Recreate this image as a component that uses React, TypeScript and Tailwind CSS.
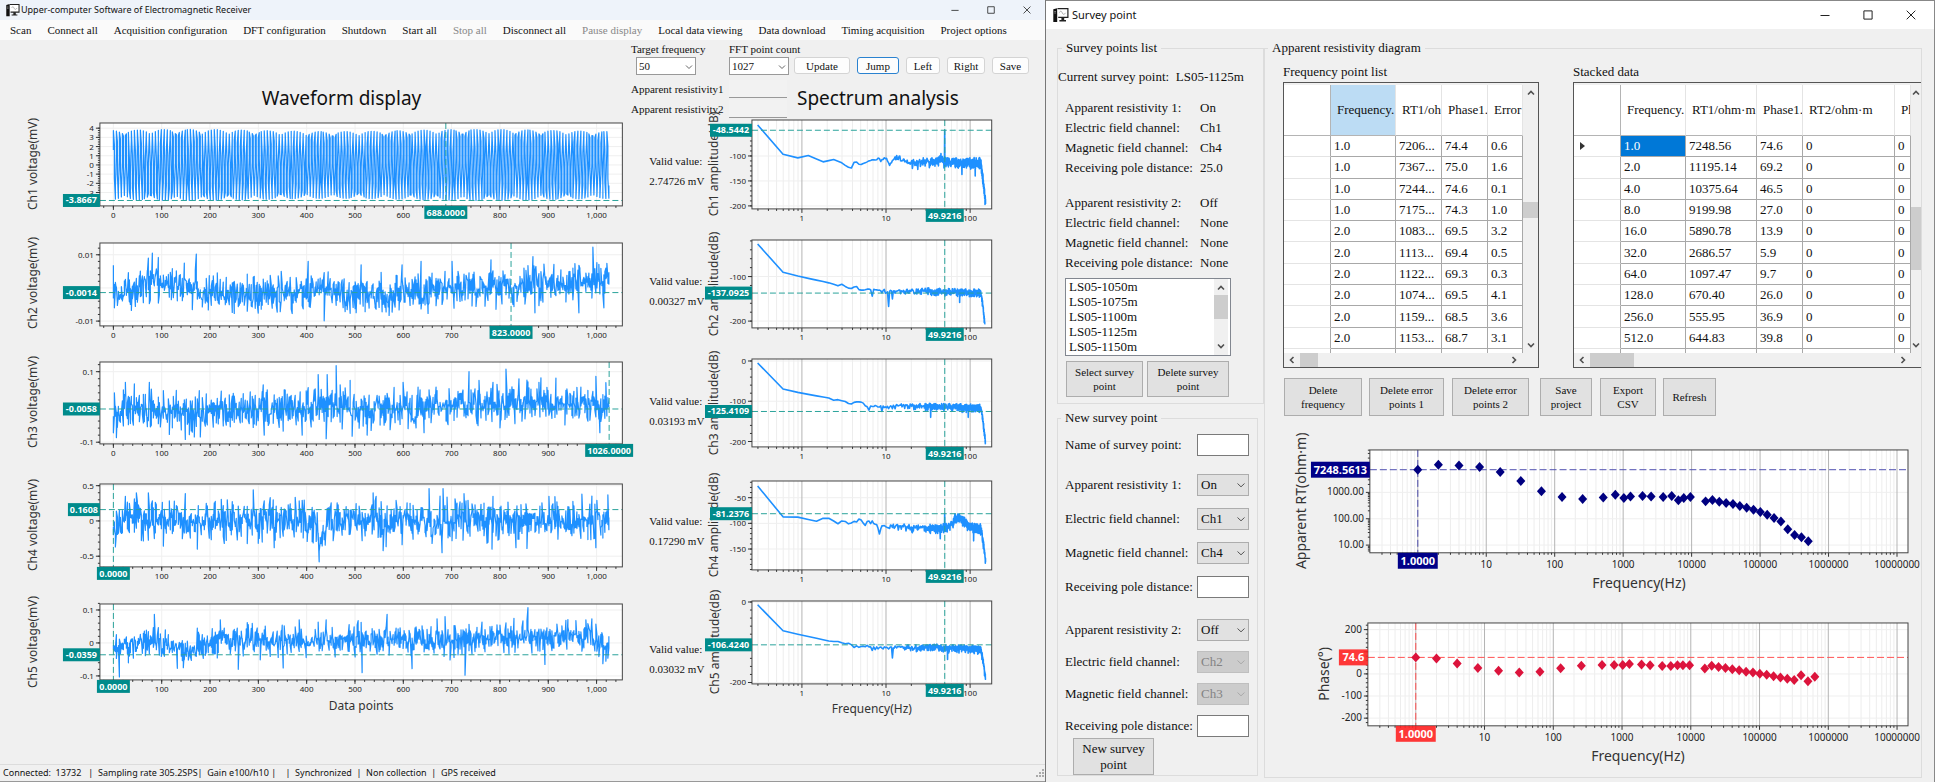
import { useId, useMemo, type ReactNode } from 'react'
import clsx from 'clsx'

type Point = [number, number]

interface Axis {
  at: (v: number) => number
  major: number[]
  minor: number[]
  format?: (v: number) => string
}

interface PlotProps {
  width: number
  height: number
  box: { left: number; top: number; right: number; bottom: number }
  x: Axis
  y: Axis
  cursor: Point
  cursorText: [string, string]
  yTitle: string
  yTitleAt: Point
  xTitle?: string
  xTitleY?: number
  strongGrid?: boolean
  large?: boolean
  tone: 'teal' | 'navy' | 'red'
  children: ReactNode
}

const TONES = {
  teal: { line: 'stroke-[#2aa39b]', box: 'fill-[#008b8b]' },
  navy: { line: 'stroke-[#5050b0]', box: 'fill-[#000088]' },
  red: { line: 'stroke-[#ff5050]', box: 'fill-[#ff2222]/90' },
}

// ---- scales ----

const linear = (zero: number, perUnit: number) => (v: number) => zero + v * perUnit
const log = (one: number, perDecade: number) => (v: number) => one + Math.log10(v) * perDecade

function range(from: number, to: number, step: number) {
  const out: number[] = []
  for (let i = 0; from + i * step <= to + step / 1000; i++) out.push(from + i * step)
  return out
}

function logMinors(from: number, to: number) {
  const out: number[] = []
  for (let d = Math.floor(Math.log10(from)); d <= Math.log10(to); d++) {
    for (let m = 2; m < 10; m++) {
      const v = m * 10 ** d
      if (v >= from && v <= to) out.push(v)
    }
  }
  return out
}

function randomizer(seed: number) {
  let s = seed
  return () => {
    s = (s + 0x6d2b79f5) | 0
    let t = Math.imul(s ^ (s >>> 15), 1 | s)
    t = (t + Math.imul(t ^ (t >>> 7), 61 | t)) ^ t
    return ((t ^ (t >>> 14)) >>> 0) / 4294967296
  }
}

const toPath = (points: Point[]) =>
  points.map(([px, py], i) => `${i ? 'L' : 'M'}${px.toFixed(1)} ${py.toFixed(1)}`).join('')

// ---- plot frame shared by every chart ----

function Plot({
  width, height, box, x, y, cursor, cursorText, yTitle, yTitleAt,
  xTitle, xTitleY = 0, strongGrid, large, tone, children,
}: PlotProps) {
  const { left, top, right, bottom } = box
  const cx = x.at(cursor[0])
  const cy = y.at(cursor[1])
  const tagH = large ? 16 : 13
  const charW = large ? 6 : 5
  const xTagW = cursorText[0].length * charW + (large ? 4 : 3)
  const yTagW = cursorText[1].length * charW + (large ? 5 : 2)
  const tick = large ? 'text-[10px]' : 'text-[8px]'
  const tag = large ? 'text-[11px]' : 'text-[9px]'
  const title = large ? 'text-[14px]' : 'text-[12px]'
  const xText = x.format ?? String
  const yText = y.format ?? String
  const { line, box: tagBox } = TONES[tone]
  // a read-out takes the place of the tick labels under it
  const xLabelled = (v: number) => Math.abs(x.at(v) - cx) > xTagW / 2
  const yLabelled = (v: number) => Math.abs(y.at(v) - cy) > 6

  return (
    <svg viewBox={`0 0 ${width} ${height}`} className="block w-full h-auto overflow-visible font-[family-name:'Noto_Sans',sans-serif]">
      <text
        transform={`translate(${yTitleAt[0]} ${yTitleAt[1]}) rotate(-90)`}
        textAnchor="middle"
        dominantBaseline="central"
        className={clsx(title, 'fill-[#333]')}
      >
        {yTitle}
      </text>
      <rect x={left} y={top} width={right - left} height={bottom - top} className="fill-white" />

      {/* grid */}
      {strongGrid && x.minor.map((v) => (
        <path key={v} d={`M${x.at(v)} ${top}V${bottom}`} className="stroke-[#ededed]" />
      ))}
      {y.major.map((v) => (
        <path key={v} d={`M${left} ${y.at(v)}H${right}`} className="stroke-[#efefef]" />
      ))}
      {x.major.map((v) => (
        <path key={v} d={`M${x.at(v)} ${top}V${bottom}`} className={strongGrid ? 'stroke-[#b4b4b4]' : 'stroke-[#f0f0f0]'} />
      ))}

      {!large && children}
      <path d={`M${left} ${cy}H${right}`} className={line} strokeDasharray={large ? '7 3' : '6 3'} fill="none" />
      <path d={`M${cx} ${top}V${bottom}`} className={line} strokeDasharray={large ? '7 3' : '6 3'} fill="none" />
      {large && children}

      {/* frame and ticks */}
      <rect x={left} y={top} width={right - left} height={bottom - top} fill="none" className="stroke-[#444]" />
      {x.minor.map((v) => (
        <path key={v} d={`M${x.at(v)} ${bottom}v2`} className="stroke-[#333]" />
      ))}
      {y.minor.map((v) => (
        <path key={v} d={`M${left} ${y.at(v)}h-2`} className="stroke-[#333]" />
      ))}
      {x.major.map((v) => (
        <g key={v}>
          <path d={`M${x.at(v)} ${bottom}v4`} className="stroke-[#333]" />
          {xLabelled(v) && (
            <text x={x.at(v)} y={bottom + (large ? 15 : 12)} textAnchor="middle" className={clsx(tick, 'fill-[#222]')}>
              {xText(v)}
            </text>
          )}
        </g>
      ))}
      {y.major.map((v) => (
        <g key={v}>
          <path d={`M${left} ${y.at(v)}h-4`} className="stroke-[#333]" />
          {yLabelled(v) && (
            <text x={left - 6} y={y.at(v) + 3} textAnchor="end" className={clsx(tick, 'fill-[#222]')}>
              {yText(v)}
            </text>
          )}
        </g>
      ))}
      {xTitle && (
        <text x={(left + right) / 2} y={xTitleY} textAnchor="middle" className={clsx(title, 'fill-[#333]')}>
          {xTitle}
        </text>
      )}

      {/* cursor read-outs */}
      <rect x={left - yTagW} y={cy - tagH / 2} width={yTagW} height={tagH} className={tagBox} />
      <text x={left - yTagW / 2} y={cy + (large ? 4 : 3)} textAnchor="middle" className={clsx(tag, 'font-bold fill-white')}>
        {cursorText[1]}
      </text>
      <rect x={cx - xTagW / 2} y={bottom} width={xTagW} height={tagH} className={tagBox} />
      <text x={cx} y={bottom + (large ? 12 : 10)} textAnchor="middle" className={clsx(tag, 'font-bold fill-white')}>
        {cursorText[0]}
      </text>
    </svg>
  )
}

// ---- receiver channels ----

interface Channel {
  name: string
  valid: string
  wave: {
    top: number
    bottom: number
    zero: number
    scale: number
    major: number[]
    minor: number[]
    cursor: Point
    text: [string, string]
    noise: number
    drift: Point[]
    peaks: Point[]
    titleY: number
  }
  spectrum: {
    top: number
    bottom: number
    zero: number
    scale: number
    major: number[]
    minor: number[]
    level: number
    text: string
    curve: Point[]
    noise: number
    end: number
    peaks: Point[]
    titleY: number
  }
}

const CHANNELS: Channel[] = [
  {
    name: 'Ch1',
    valid: '2.74726 mV',
    wave: {
      top: 10, bottom: 93, zero: 52, scale: -9.2, titleY: 51,
      major: range(-3, 4, 1), minor: range(-4, 4, 0.25),
      cursor: [688, -3.8667], text: ['688.0000', '-3.8667'],
      noise: 0, drift: [], peaks: [],
    },
    spectrum: {
      top: 7, bottom: 96, zero: -7, scale: -0.5, titleY: 51,
      major: [-200, -150, -100], minor: range(-200, -40, 10),
      level: -48.5442, text: '-48.5442',
      curve: [[0.298, -38], [0.6, -97], [0.9, -104], [1.2, -99], [1.8, -112], [2.4, -107], [3, -114], [3.6, -124], [4.2, -112], [5, -113], [6, -112], [8, -105], [9, -107], [10, -100], [11, -120], [13.5, -99], [16, -112], [25, -114], [45, -108], [60, -112], [130, -112]],
      noise: 9, end: -200, peaks: [[45, -95], [49.9, -48.5], [80, -137], [115, -140]],
    },
  },
  {
    name: 'Ch2',
    valid: '0.00327 mV',
    wave: {
      top: 10, bottom: 93, zero: 55, scale: -3320, titleY: 50,
      major: [-0.01, 0, 0.01], minor: range(-0.01, 0.012, 0.002),
      cursor: [823, -0.0014], text: ['823.0000', '-0.0014'],
      noise: 0.0026,
      drift: [[0, -0.001], [90, 0.002], [180, -0.001], [280, -0.002], [420, -0.0005], [560, -0.002], [700, 0.0002], [900, 0.0012], [1026, 0.0022]],
      peaks: [[0, 0.0068], [3, -0.006], [38, -0.0068], [72, 0.009], [80, 0.0105], [92, 0.0092], [146, 0.0075], [171, 0.0102], [250, -0.0077], [370, -0.0077], [403, 0.008], [437, -0.0099], [512, 0.007], [571, -0.0083], [577, -0.0073], [597, 0.007], [636, 0.008], [651, -0.0077], [701, 0.008], [781, 0.0085], [868, 0.0095], [872, -0.0075], [963, -0.0075], [993, 0.0123], [1015, -0.006]],
    },
    spectrum: {
      top: 7, bottom: 95, zero: -1, scale: -0.446, titleY: 51,
      major: [-200, -100], minor: range(-200, -20, 20),
      level: -137.0925, text: '-137.0925',
      curve: [[0.298, -27], [0.6, -91], [1, -101], [2.2, -115], [2.7, -121], [3, -117], [3.5, -126], [4, -122], [5, -128], [6, -130], [10, -133], [30, -132], [130, -135]],
      noise: 7, end: -206, peaks: [[6.8, -144], [10.7, -167], [12, -150], [75, -158]],
    },
  },
  {
    name: 'Ch3',
    valid: '0.03193 mV',
    wave: {
      top: 9, bottom: 91, zero: 54, scale: -353, titleY: 49,
      major: [-0.1, 0.1], minor: range(-0.1, 0.12, 0.02),
      cursor: [1026, -0.0058], text: ['1026.0000', '-0.0058'],
      noise: 0.026,
      drift: [[0, 0], [60, -0.01], [200, -0.015], [440, 0.006], [600, -0.01], [750, 0.01], [900, 0.015], [1026, 0]],
      peaks: [[7, -0.087], [25, 0.07], [74, 0.07], [148, -0.092], [168, -0.085], [180, -0.085], [310, 0.063], [312, -0.08], [390, -0.08], [424, 0.092], [441, -0.09], [443, 0.092], [462, 0.117], [490, 0.075], [495, -0.083], [526, -0.08], [600, 0.07], [642, -0.073], [735, 0.1], [757, 0.075], [785, 0.07], [813, 0.107], [839, 0.08], [881, 0.07], [915, 0.082], [999, 0.087], [1006, -0.073]],
    },
    spectrum: {
      top: 6, bottom: 94, zero: 8, scale: -0.403, titleY: 50,
      major: [-200, -100, 0], minor: range(-200, 0, 20),
      level: -125.4109, text: '-125.4109',
      curve: [[0.298, -5], [0.6, -70], [1, -80], [2.2, -93], [2.4, -98], [2.7, -96], [3.3, -101], [3.8, -110], [4.2, -102], [5.2, -104], [6, -115], [8, -112], [30, -112], [130, -115]],
      noise: 8, end: -206, peaks: [[6.4, -122], [9, -125], [34, -140], [95, -140]],
    },
  },
  {
    name: 'Ch4',
    valid: '0.17290 mV',
    wave: {
      top: 11, bottom: 94, zero: 48, scale: -70.6, titleY: 52,
      major: [-0.5, 0, 0.5], minor: range(-0.6, 0.5, 0.1),
      cursor: [0, 0.1608], text: ['0.0000', '0.1608'],
      noise: 0.14,
      drift: [[0, -0.05], [30, 0.02], [415, 0], [424, -0.22], [438, -0.22], [446, 0], [1026, 0]],
      peaks: [[5, -0.37], [24, 0.35], [48, 0.4], [73, 0.4], [148, 0.39], [174, -0.4], [290, 0.44], [330, 0.3], [332, -0.38], [425, -0.58], [538, 0.4], [543, 0.35], [559, -0.42], [654, 0.46], [680, -0.45], [683, 0.46], [784, -0.4], [785, 0.35], [833, -0.38], [902, 0.35], [970, 0.38], [998, -0.38], [1024, 0.37]],
    },
    spectrum: {
      top: 8, bottom: 97, zero: -1, scale: -0.514, titleY: 52,
      major: [-150, -100, -50], minor: range(-190, -20, 10),
      level: -81.2376, text: '-81.2376',
      curve: [[0.298, -27], [0.6, -88], [0.9, -88], [1.5, -96], [1.8, -90], [2.1, -90], [2.7, -101], [3, -95], [3.7, -98], [5, -94], [5.4, -102], [6, -94], [7.3, -98], [8.4, -115], [9.2, -101], [10.5, -112], [12, -104], [20, -109], [55, -108], [62, -100], [66, -87], [78, -92], [85, -93], [95, -105], [130, -108]],
      noise: 8, end: -184, peaks: [[44, -130], [49.9, -82], [110, -134]],
    },
  },
  {
    name: 'Ch5',
    valid: '0.03032 mV',
    wave: {
      top: 11, bottom: 87, zero: 50, scale: -330, titleY: 49,
      major: [-0.1, 0, 0.1], minor: range(-0.1, 0.12, 0.02),
      cursor: [0, -0.0359], text: ['0.0000', '-0.0359'],
      noise: 0.022,
      drift: [[0, 0], [20, -0.015], [70, 0.008], [140, -0.025], [220, 0.01], [320, 0.01], [450, 0], [560, 0.015], [700, 0.005], [850, 0.018], [990, 0.02], [1026, -0.02]],
      peaks: [[12, -0.103], [85, 0.087], [145, -0.075], [222, 0.07], [259, -0.08], [351, -0.076], [385, 0.07], [424, 0.063], [440, 0.07], [506, 0.068], [514, -0.09], [566, 0.087], [618, -0.078], [670, 0.073], [687, 0.08], [728, -0.098], [762, 0.063], [857, 0.107], [893, -0.065], [958, 0.068], [978, 0.07], [990, 0.073], [1020, -0.055]],
    },
    spectrum: {
      top: 8, bottom: 91, zero: 9, scale: -0.403, titleY: 49,
      major: [-200, 0], minor: range(-200, 0, 20),
      level: -106.424, text: '-106.4240',
      curve: [[0.298, -7], [0.6, -72], [1, -82], [2.2, -98], [2.7, -98], [3.2, -104], [4, -102], [4.3, -114], [5, -106], [7, -113], [30, -112], [130, -116]],
      noise: 8, end: -192, peaks: [[7, -120], [12, -139], [54, -143]],
    },
  },
]

function interpolate(curve: Point[], v: number, ease: (n: number) => number = (n) => n) {
  if (!curve.length) return 0
  const i = curve.findIndex(([cv]) => cv >= v)
  if (i === -1) return curve[curve.length - 1][1]
  if (i === 0) return curve[0][1]
  const [x0, y0] = curve[i - 1]
  const [x1, y1] = curve[i]
  return y0 + ((ease(v) - ease(x0)) / (ease(x1) - ease(x0))) * (y1 - y0)
}

function waveSamples(channel: Channel, seed: number): Point[] {
  const { noise, drift, peaks } = channel.wave
  const rnd = randomizer(seed)
  const spikes = new Map(peaks)
  return Array.from({ length: 1027 }, (_, i): Point => {
    if (!noise) {
      const amp = 3.75 + 0.12 * Math.sin(i / 97)
      return [i, amp * Math.sin(2 * Math.PI * i * 0.16357 + 0.45)]
    }
    const n = (rnd() + rnd() + rnd() - 1.5) * 2 * noise
    return [i, spikes.get(i) ?? interpolate(drift, i) + n]
  })
}

function spectrumSamples(channel: Channel, seed: number): Point[] {
  const { curve, noise, end, peaks } = channel.spectrum
  const rnd = randomizer(seed)
  const out: Point[] = []
  for (let k = 1; k <= 512; k++) {
    const f = k * 0.298
    let v = interpolate(curve, f, Math.log10)
    const spread = f < 3.5 ? 0 : Math.min(1, f / 40 + 0.3)
    const r = rnd() + rnd() - 1
    v += r * noise * spread * (r < 0 ? 1.8 : 1.1)
    if (f > 132) v += (end + 116) * ((f - 132) / 20.6) ** 1.4
    v = Math.max(v, end)
    const peak = peaks.find(([pf]) => Math.abs(pf - f) < 0.149)
    out.push([f, peak ? peak[1] : v])
  }
  return out
}

const WAVE_X: Axis = {
  at: linear(113.5, 0.4837),
  major: range(0, 1000, 100),
  minor: range(-20, 1040, 20),
  format: (v) => v.toLocaleString('en-US'),
}

const SPECTRUM_X: Axis = {
  at: log(98, 84.2),
  major: [1, 10, 100],
  minor: logMinors(0.3, 180),
}

function WaveChart({ channel, index }: { channel: Channel; index: number }) {
  const { wave } = channel
  const last = index === CHANNELS.length - 1
  const y: Axis = { at: linear(wave.zero, wave.scale), major: wave.major, minor: wave.minor }
  // samples snap to whole columns, two or three to each
  const path = useMemo(
    () => toPath(waveSamples(channel, 11 + index).map(([i, v]) => [Math.floor(WAVE_X.at(i)) + 0.5, wave.zero + v * wave.scale])),
    [channel, index, wave],
  )
  return (
    <Plot
      width={640}
      height={last ? 130 : 120}
      box={{ left: 100, top: wave.top, right: 623, bottom: wave.bottom }}
      x={WAVE_X}
      y={y}
      cursor={wave.cursor}
      cursorText={wave.text}
      yTitle={`${channel.name} voltage(mV)`}
      yTitleAt={[33, wave.titleY]}
      xTitle={last ? 'Data points' : undefined}
      xTitleY={117}
      tone="teal"
    >
      <path d={path} fill="none" className="stroke-[#1e90ff] stroke-[1.2px]" strokeLinejoin="round" />
    </Plot>
  )
}

function SpectrumChart({ channel, index }: { channel: Channel; index: number }) {
  const { spectrum } = channel
  const last = index === CHANNELS.length - 1
  const y: Axis = { at: linear(spectrum.zero, spectrum.scale), major: spectrum.major, minor: spectrum.minor }
  const path = useMemo(
    () => toPath(spectrumSamples(channel, 71 + index).map(([f, v]) => [SPECTRUM_X.at(f), spectrum.zero + v * spectrum.scale])),
    [channel, index, spectrum],
  )
  return (
    <Plot
      width={341}
      height={last ? 130 : 120}
      box={{ left: 48, top: spectrum.top, right: 288, bottom: spectrum.bottom }}
      x={SPECTRUM_X}
      y={y}
      cursor={[49.9216, spectrum.level]}
      cursorText={['49.9216', spectrum.text]}
      yTitle={`${channel.name} amplitude(dB)`}
      yTitleAt={[10, spectrum.titleY]}
      xTitle={last ? 'Frequency(Hz)' : undefined}
      xTitleY={120}
      strongGrid
      tone="teal"
    >
      <path d={path} fill="none" className="stroke-[#1e90ff] stroke-[1.6px]" strokeLinejoin="round" />
    </Plot>
  )
}

// ---- survey charts ----

const LOW_FREQS = [1, 2, 4, 8, 16, 32, 64, 128, 256, 512, 768, 1024, 1280, 1920, 2560, 3840, 5120, 6400, 7680, 9600]
const surveyFreq = (i: number) => (i < LOW_FREQS.length ? LOW_FREQS[i] : 16000 * 10 ** ((i - LOW_FREQS.length) / 10))

const RESISTIVITY = [
  7248.56, 11195, 10375, 9200, 5890, 2686, 1097, 670, 556, 645, 816, 610, 705, 727, 705, 666, 727, 498, 610, 666,
  456, 513, 443, 395, 362, 304, 263, 221, 180, 143, 107, 78, 40, 24, 20, 14,
]
const PHASE = [
  74.6, 69.2, 46.5, 27, 13.9, 5.9, 9.7, 26, 36.9, 39.8, 40, 40, 45, 42, 39, 36, 36, 39, 39, 39,
  24, 37, 31, 27, 21, 16, 10, 6, 1, -4, -11, -16, -22, -28, -6, -33, -13,
]

const DECADES = range(0, 7, 1).map((d) => 10 ** d)

function Diamonds({ values, x, y, className }: { values: number[]; x: Axis; y: Axis; className: string }) {
  return (
    <g className={className}>
      {values.map((v, i) => (
        <path key={i} d={`M${x.at(surveyFreq(i))} ${y.at(v) - 5}l4.5 5l-4.5 5l-4.5 -5z`} />
      ))}
    </g>
  )
}

function ResistivityChart() {
  const x: Axis = { at: log(153, 68.57), major: DECADES, minor: logMinors(0.21, 1.4e7) }
  const y: Axis = { at: log(151.7, -26.4), major: [10, 100, 1000], minor: logMinors(6, 40000), format: (v) => v.toFixed(2) }
  return (
    <Plot
      width={657}
      height={185}
      box={{ left: 105, top: 30, right: 644, bottom: 133 }}
      x={x}
      y={y}
      cursor={[1, 7248.5613]}
      cursorText={['1.0000', '7248.5613']}
      yTitle="Apparent RT(ohm·m)"
      yTitleAt={[36, 81]}
      xTitle="Frequency(Hz)"
      xTitleY={168}
      strongGrid
      large
      tone="navy"
    >
      <Diamonds values={RESISTIVITY} x={x} y={y} className="fill-[#000080]" />
    </Plot>
  )
}

function PhaseChart() {
  const x: Axis = { at: log(151, 68.86), major: DECADES, minor: logMinors(0.21, 1.4e7) }
  const y: Axis = { at: linear(69, -0.2217), major: range(-200, 200, 100), minor: range(-220, 220, 20) }
  return (
    <Plot
      width={657}
      height={171}
      box={{ left: 103, top: 18, right: 644, bottom: 121 }}
      x={x}
      y={y}
      cursor={[1, 74.6]}
      cursorText={['1.0000', '74.6']}
      yTitle="Phase(°)"
      yTitleAt={[59, 69]}
      xTitle="Frequency(Hz)"
      xTitleY={156}
      strongGrid
      large
      tone="red"
    >
      <Diamonds values={PHASE} x={x} y={y} className="fill-[#dc143c]" />
    </Plot>
  )
}

// ---- small pieces ----

function AppIcon({ className }: { className: string }) {
  return (
    <svg viewBox="0 0 16 16" className={className}>
      <path d="M0.3 2.2L4.2 1.2V15H0.3Z" fill="#111" />
      <path d="M4.5 1.7H14.9V10.4H5.2" fill="#fff" stroke="#222" strokeWidth="1.2" />
      <path d="M6.5 5.5C7.5 3.5 8.5 4 9.3 6S11.5 7.5 12.6 5.8" fill="none" stroke="#999" strokeWidth="0.8" />
      <path d="M8.4 10.5h2.8v2.5h1.8v1.4H6.4V13h2z" fill="#222" />
      <path d="M1.3 4.5h1.6M1.3 6h1.6" stroke="#bbb" strokeWidth="0.7" />
    </svg>
  )
}

function WindowButtons({ className, size }: { className: string; size: string }) {
  return (
    <div className={clsx('flex items-center', className)}>
      <button type="button" aria-label="Minimize">
        <svg viewBox="0 0 10 10" className={size}><path d="M0.5 5.5h9" stroke="#222" fill="none" /></svg>
      </button>
      <button type="button" aria-label="Maximize">
        <svg viewBox="0 0 10 10" className={size}><path d="M0.9 0.9h8.2v8.2H0.9z" stroke="#222" fill="none" /></svg>
      </button>
      <button type="button" aria-label="Close">
        <svg viewBox="0 0 10 10" className={size}><path d="M0.7 0.7l8.6 8.6M9.3 0.7L0.7 9.3" stroke="#222" fill="none" /></svg>
      </button>
    </div>
  )
}

function Arrow({ turn }: { turn: 'up' | 'down' | 'left' | 'right' }) {
  const d = {
    up: 'M1 5.5L4 2.5L7 5.5',
    down: 'M1 2.5L4 5.5L7 2.5',
    left: 'M5.5 1L2.5 4L5.5 7',
    right: 'M2.5 1L5.5 4L2.5 7',
  }[turn]
  return (
    <svg viewBox="0 0 8 8" className="block size-2 shrink-0">
      <path d={d} fill="none" stroke="#505050" strokeWidth="1.6" />
    </svg>
  )
}

function Grip() {
  return (
    <svg viewBox="0 0 9 9" className="size-[9px]" fill="#aaa">
      <path d="M6 0h2v2h-2zM6 3h2v2h-2zM3 3h2v2h-2zM6 6h2v2h-2zM3 6h2v2h-2zM0 6h2v2h-2z" />
    </svg>
  )
}

// ---- receiver window ----

const MENU = [
  'Scan', 'Connect all', 'Acquisition configuration', 'DFT configuration', 'Shutdown', 'Start all', 'Stop all',
  'Disconnect all', 'Pause display', 'Local data viewing', 'Data download', 'Timing acquisition', 'Project options',
]
const DISABLED = ['Stop all', 'Pause display']

function ToolSelect({ label, value }: { label: string; value: string }) {
  const id = useId()
  return (
    <div className="flex flex-col">
      <label htmlFor={id} className="leading-[14px] whitespace-nowrap">{label}</label>
      <div className={clsx('relative mt-px w-[60px]', value === '50' && 'ml-[5px]')}>
        <select id={id} defaultValue={value} className="block h-[18px] w-full appearance-none border border-[#999] bg-white pl-0.5 text-[11px] leading-4">
          <option>{value}</option>
        </select>
        <svg viewBox="0 0 8 8" className="pointer-events-none absolute right-[3px] top-[6px] size-2">
          <path d="M1 2.5L4 5.5L7 2.5" fill="none" stroke="#666" />
        </svg>
      </div>
    </div>
  )
}

function ToolButton({ children, className }: { children: string; className: string }) {
  return (
    <button type="button" className={clsx('h-[17px] rounded-[3px] border bg-[#fdfdfd] leading-[14px]', className)}>
      {children}
    </button>
  )
}

function ReceiverWindow() {
  const r1 = useId()
  const r2 = useId()
  return (
    <section className="flex min-w-0 flex-col border-r border-[#777] bg-[#f0f0f0]">
      <header className="flex h-5 items-center bg-[#eef3fa] pl-1.5 font-[family-name:'Noto_Sans',sans-serif]">
        <AppIcon className="size-[14px]" />
        <h1 className="ml-px flex-1 text-[9px] leading-4">Upper-computer Software of Electromagnetic Receiver</h1>
        <WindowButtons className="gap-7 pr-[14px]" size="block size-2" />
      </header>
      <nav className="flex h-5 items-center gap-4 bg-[#fafafa] pl-2.5 text-[11px]">
        {MENU.map((item) => (
          <button key={item} type="button" disabled={DISABLED.includes(item)} className="whitespace-nowrap disabled:text-[#888]">
            {item}
          </button>
        ))}
      </nav>

      <div className="flex h-[73px] text-[11px]">
        <h2 className="flex-1 pl-[52px] pt-11 text-center font-[family-name:'Noto_Sans',sans-serif] text-[19px] leading-7">
          Waveform display
        </h2>
        <div className="w-[414px] pt-0.5">
          <div className="flex items-end">
            <div className="w-[98px]"><ToolSelect label="Target frequency" value="50" /></div>
            <div className="w-[60px]"><ToolSelect label="FFT point count" value="1027" /></div>
            <div className="ml-[5px] flex gap-[7px] pb-px">
              <ToolButton className="w-14 border-[#d4d4d4]">Update</ToolButton>
              <ToolButton className="w-[42px] border-[#2a82d0]">Jump</ToolButton>
              <ToolButton className="w-[34px] border-[#d4d4d4]">Left</ToolButton>
              <ToolButton className="w-[38px] border-[#d4d4d4]">Right</ToolButton>
              <ToolButton className="w-[37px] border-[#d4d4d4]">Save</ToolButton>
            </div>
          </div>
          <div className="mt-[5px] flex">
            <div className="grid grid-cols-[98px_58px] gap-y-0.5 leading-[18px]">
              <label htmlFor={r1}>Apparent resistivity1</label>
              <input id={r1} readOnly className="h-[18px] w-full border-b border-[#999] bg-[#f2f2f2]" />
              <label htmlFor={r2}>Apparent resistivity2</label>
              <input id={r2} readOnly className="h-[18px] w-full border-b border-[#999] bg-[#f2f2f2]" />
            </div>
            <h2 className="ml-2.5 pt-1 font-[family-name:'Noto_Sans',sans-serif] text-[19px] leading-7">Spectrum analysis</h2>
          </div>
        </div>
      </div>

      {CHANNELS.map((channel, i) => (
        <div key={channel.name} className="grid grid-cols-[640fr_64fr_341fr]">
          <WaveChart channel={channel} index={i} />
          <dl className={clsx('pl-2.5 text-[11px] leading-5 whitespace-nowrap', i === 4 ? 'pt-[46px]' : 'pt-[38px]')}>
            <dt>Valid value:</dt>
            <dd>{channel.valid}</dd>
          </dl>
          <SpectrumChart channel={channel} index={i} />
        </div>
      ))}

      <footer className="mt-auto flex h-[18px] items-center border-t border-b border-t-[#dcdcdc] border-b-[#999] pl-[3px] font-[family-name:'Noto_Sans',sans-serif] text-[9px]">
        <p className="flex-1 whitespace-pre">{'Connected:  13732   |  Sampling rate 305.2SPS|  Gain e100/h10 |    |  Synchronized  |  Non collection  |  GPS received'}</p>
        <Grip />
      </footer>
    </section>
  )
}

// ---- survey window ----

const SETTINGS = [
  [['Apparent resistivity 1:', 'On'], ['Electric field channel:', 'Ch1'], ['Magnetic field channel:', 'Ch4'], ['Receiving pole distance:', '25.0']],
  [['Apparent resistivity 2:', 'Off'], ['Electric field channel:', 'None'], ['Magnetic field channel:', 'None'], ['Receiving pole distance:', 'None']],
]

const SURVEY_POINTS = ['LS05-1050m', 'LS05-1075m', 'LS05-1100m', 'LS05-1125m', 'LS05-1150m']

const FREQUENCY_ROWS = [
  ['1.0', '7206...', '74.4', '0.6'],
  ['1.0', '7367...', '75.0', '1.6'],
  ['1.0', '7244...', '74.6', '0.1'],
  ['1.0', '7175...', '74.3', '1.0'],
  ['2.0', '1083...', '69.5', '3.2'],
  ['2.0', '1113...', '69.4', '0.5'],
  ['2.0', '1122...', '69.3', '0.3'],
  ['2.0', '1074...', '69.5', '4.1'],
  ['2.0', '1159...', '68.5', '3.6'],
  ['2.0', '1153...', '68.7', '3.1'],
]

const STACKED_ROWS = [
  ['1.0', '7248.56', '74.6', '0', '0'],
  ['2.0', '11195.14', '69.2', '0', '0'],
  ['4.0', '10375.64', '46.5', '0', '0'],
  ['8.0', '9199.98', '27.0', '0', '0'],
  ['16.0', '5890.78', '13.9', '0', '0'],
  ['32.0', '2686.57', '5.9', '0', '0'],
  ['64.0', '1097.47', '9.7', '0', '0'],
  ['128.0', '670.40', '26.0', '0', '0'],
  ['256.0', '555.95', '36.9', '0', '0'],
  ['512.0', '644.83', '39.8', '0', '0'],
]

interface DataTableProps {
  heads: string[]
  widths: string[]
  rows: string[][]
  headActive?: boolean
  selected?: boolean
}

function DataTable({ heads, widths, rows, headActive, selected }: DataTableProps) {
  return (
    <table className="h-[268px] w-full table-fixed border-separate border-spacing-0 bg-white text-left">
      <colgroup>
        <col className="w-[47px]" />
        {widths.map((w, i) => <col key={i} className={w} />)}
      </colgroup>
      <thead>
        <tr className="h-[51px]">
          <th className="border-r border-b border-[#b4b4b4]" />
          {heads.map((h, i) => (
            <th
              key={h}
              className={clsx(
                'overflow-hidden border-r border-b border-r-[#e4e4e4] border-b-[#b4b4b4] pl-1.5 font-normal whitespace-nowrap',
                headActive && i === 0 && 'bg-[#bcdcf4]',
              )}
            >
              {h}
            </th>
          ))}
        </tr>
      </thead>
      <tbody>
        {rows.map((row, r) => (
          <tr key={r}>
            <th className="border-r border-b border-r-[#a8a8a8] border-b-[#e4e4e4] pl-1.5">
              {selected && r === 0 && (
                <svg viewBox="0 0 5 8" className="h-2 w-[5px]"><path d="M0 0L5 4L0 8Z" fill="#333" /></svg>
              )}
            </th>
            {row.map((cell, c) => (
              <td
                key={c}
                className={clsx(
                  'overflow-hidden border-r border-b border-[#a8a8a8] pl-[3px] leading-4 whitespace-nowrap',
                  selected && r === 0 && c === 0 && 'bg-[#0078d7] text-white',
                )}
              >
                {cell}
              </td>
            ))}
          </tr>
        ))}
        <tr className="h-1">
          {['', ...heads].map((_, c) => <td key={c} className="border-r border-[#a8a8a8]" />)}
        </tr>
      </tbody>
    </table>
  )
}

function PushButton({ children, className }: { children: ReactNode; className: string }) {
  return (
    <button type="button" className={clsx('border border-[#adadad] bg-[#e1e1e1] text-center', className)}>
      {children}
    </button>
  )
}

function FormRow({ label, options, disabled }: { label: string; options?: string; disabled?: boolean }) {
  const id = useId()
  return (
    <div className="flex items-center justify-between">
      <label htmlFor={id}>{label}</label>
      {options ? (
        <div className="relative w-[52px]">
          <select
            id={id}
            defaultValue={options}
            disabled={disabled}
            className="block h-[22px] w-full appearance-none border border-[#adadad] bg-[#e1e1e1] pl-[3px] opacity-100 disabled:border-[#bfbfbf] disabled:bg-[#cccccc] disabled:text-[#838383]"
          >
            <option>{options}</option>
          </select>
          <svg viewBox="0 0 8 8" className="pointer-events-none absolute top-[7px] right-1 size-2">
            <path d="M0.5 2.5L4 5.8L7.5 2.5" fill="none" stroke={disabled ? '#aaa' : '#555'} />
          </svg>
        </div>
      ) : (
        <input id={id} type="text" className="h-[22px] w-[52px] border border-[#7a7a7a] bg-white px-1" />
      )}
    </div>
  )
}

function SurveyWindow() {
  return (
    <section className="flex min-w-0 flex-col border-t border-r border-[#888] bg-[#f0f0f0] text-[13px] leading-4">
      <header className="flex h-7 items-center bg-white pl-[7px] font-[family-name:'Noto_Sans',sans-serif]">
        <AppIcon className="size-4" />
        <h1 className="ml-[3px] flex-1 text-[11px]">Survey point</h1>
        <WindowButtons className="gap-[33px] pr-[18px]" size="block size-2.5" />
      </header>

      <div className="grid flex-1 grid-cols-[207px_1fr] pt-[11px] pr-3 pb-1 pl-[11px]">
        <div>
          <fieldset className="h-[364px] border border-[#dcdcdc]">
            <legend className="ml-1 px-1">Survey points list</legend>
            <p className="mt-[13px] w-48 bg-[#f0f0f0] whitespace-pre">{'Current survey point:  LS05-1125m'}</p>
            <div className="mt-[13px] flex flex-col gap-[15px] pl-[7px]">
              {SETTINGS.map((group, g) => (
                <dl key={g} className="grid grid-cols-[135px_1fr] leading-5">
                  {group.map(([k, v]) => [<dt key={k}>{k}</dt>, <dd key={`${k}v`}>{v}</dd>])}
                </dl>
              ))}
            </div>
            <div className="mt-[5px] ml-[7px] flex h-[78px] w-[166px] border border-[#828790] bg-white">
              <select size={5} aria-label="Survey points" className="flex-1 appearance-none overflow-hidden bg-white outline-none">
                {SURVEY_POINTS.map((p) => (
                  <option key={p} className="h-[15px] min-h-0 px-[3px] py-0 leading-[15px]">{p}</option>
                ))}
              </select>
              <div className="mr-0.5 flex w-[14px] flex-col items-center bg-[#f0f0f0] py-[5px]">
                <Arrow turn="up" />
                <div className="mt-[3px] mb-auto h-6 w-full bg-[#cdcdcd]" />
                <Arrow turn="down" />
              </div>
            </div>
            <div className="mt-[5px] ml-2 flex gap-1 text-[11px] leading-[14px]">
              <PushButton className="h-9 w-[77px]">Select survey<br />point</PushButton>
              <PushButton className="h-9 w-[82px]">Delete survey<br />point</PushButton>
            </div>
          </fieldset>

          <fieldset className="mt-1.5 w-[201px] border border-[#dcdcdc] pr-2 pl-[7px]">
            <legend className="-ml-1 px-1">New survey point</legend>
            <div className="pt-2">
              <FormRow label="Name of survey point:" />
            </div>
            <div className="mt-[18px] flex flex-col gap-3">
              <FormRow label="Apparent resistivity 1:" options="On" />
              <FormRow label="Electric field channel:" options="Ch1" />
              <FormRow label="Magnetic field channel:" options="Ch4" />
              <FormRow label="Receiving pole distance:" />
            </div>
            <div className="mt-[21px] flex flex-col gap-2.5">
              <FormRow label="Apparent resistivity 2:" options="Off" />
              <FormRow label="Electric field channel:" options="Ch2" disabled />
              <FormRow label="Magnetic field channel:" options="Ch3" disabled />
              <FormRow label="Receiving pole distance:" />
            </div>
            <PushButton className="mt-px ml-2 block h-[37px] w-[81px]">New survey<br />point</PushButton>
          </fieldset>
        </div>

        <fieldset className="min-w-0 border border-[#dcdcdc]">
          <legend className="ml-[3px] px-1">Apparent resistivity diagram</legend>
          <div className="flex gap-[34px] pt-2 pl-[18px]">
            <div className="w-[256px] shrink-0">
              <h3>Frequency point list</h3>
              <div className="mt-0.5 h-[286px] border border-[#555] pt-0.5">
                <div className="flex h-[268px]">
                  <div className="min-w-0 flex-1 overflow-hidden">
                    <DataTable
                      heads={['Frequency.', 'RT1/oh', 'Phase1.', 'Error']}
                      widths={['w-[65px]', 'w-[46px]', 'w-[46px]', '']}
                      rows={FREQUENCY_ROWS}
                      headActive
                    />
                  </div>
                  <div className="flex w-[15px] flex-col items-center bg-[#f0f0f0] py-1">
                    <Arrow turn="up" />
                    <div className="mt-[105px] mb-auto h-4 w-full bg-[#cdcdcd]" />
                    <Arrow turn="down" />
                  </div>
                </div>
                <div className="flex h-[14px] items-center bg-[#f0f0f0] pr-5 pl-1">
                  <Arrow turn="left" />
                  <div className="mr-auto ml-1 h-full w-[18px] bg-[#cdcdcd]" />
                  <Arrow turn="right" />
                </div>
              </div>
            </div>
            <div className="min-w-0 flex-1">
              <h3>Stacked data</h3>
              <div className="mt-0.5 h-[286px] border border-r-0 border-[#555] pt-0.5">
                <div className="flex h-[268px]">
                  <div className="min-w-0 flex-1 overflow-hidden">
                    <DataTable
                      heads={['Frequency.', 'RT1/ohm·m', 'Phase1.', 'RT2/ohm·m', 'Ph']}
                      widths={['w-[65px]', 'w-[71px]', 'w-[46px]', 'w-[92px]', '']}
                      rows={STACKED_ROWS}
                      selected
                    />
                  </div>
                  <div className="flex w-2.5 flex-col items-center bg-[#f0f0f0] py-1">
                    <Arrow turn="up" />
                    <div className="mt-[110px] mb-auto h-[63px] w-full bg-[#cdcdcd]" />
                    <Arrow turn="down" />
                  </div>
                </div>
                <div className="flex h-[14px] items-center bg-[#f0f0f0] pr-[14px] pl-1">
                  <Arrow turn="left" />
                  <div className="mr-auto ml-1 h-full w-11 bg-[#cdcdcd]" />
                  <Arrow turn="right" />
                </div>
              </div>
            </div>
          </div>

          <div className="mt-2.5 flex pl-[19px] text-[11px] leading-[14px]">
            <PushButton className="h-[38px] w-[78px]">Delete<br />frequency</PushButton>
            <PushButton className="ml-[7px] h-[38px] w-[75px]">Delete error<br />points 1</PushButton>
            <PushButton className="ml-2 h-[38px] w-[77px]">Delete error<br />points 2</PushButton>
            <PushButton className="ml-[11px] h-[38px] w-[52px]">Save<br />project</PushButton>
            <PushButton className="ml-2 h-[38px] w-14">Export<br />CSV</PushButton>
            <PushButton className="ml-[7px] h-[38px] w-[53px]">Refresh</PushButton>
          </div>
          <div className="mt-1">
            <ResistivityChart />
            <PhaseChart />
          </div>
        </fieldset>
      </div>
    </section>
  )
}

export default function App() {
  return (
    <main className="grid min-h-screen grid-cols-[1046fr_889fr] overflow-hidden font-[family-name:'Liberation_Serif',serif] text-[#111]">
      <ReceiverWindow />
      <SurveyWindow />
    </main>
  )
}
